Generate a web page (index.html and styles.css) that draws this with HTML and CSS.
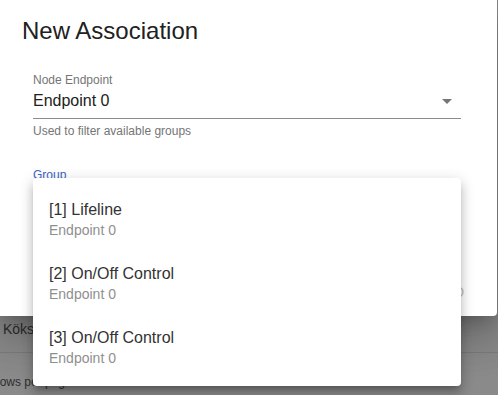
FILE: index.html
```html
<!DOCTYPE html>
<html>
<head>
	<meta charset="UTF-8">
	<title>New Association</title>
	<link rel="stylesheet" href="styles.css">
</head>
<body>
	<!-- page behind the dialog -->
	<div class="page">
		<div class="row">Köks</div>
		<div class="pager">Rows per page:</div>
	</div>

	<!-- dialog -->
	<div class="dialog">
		<div class="title">New Association</div>
		<div class="content">
			<div class="field">
				<div class="label">Node Endpoint</div>
				<div class="select">
					<span>Endpoint 0</span>
					<svg class="arrow" width="24" height="24" viewBox="0 0 24 24"><path d="M7 10l5 5 5-5z"/></svg>
				</div>
				<div class="helper">Used to filter available groups</div>
			</div>
			<div class="field group">
				<div class="label focused">Group</div>
			</div>
		</div>
		<div class="actions"><span class="btn">ADD</span></div>
	</div>

	<!-- open select menu -->
	<ul class="menu">
		<li class="item">
			<div class="primary">[1] Lifeline</div>
			<div class="secondary">Endpoint 0</div>
		</li>
		<li class="item">
			<div class="primary">[2] On/Off Control</div>
			<div class="secondary">Endpoint 0</div>
		</li>
		<li class="item">
			<div class="primary">[3] On/Off Control</div>
			<div class="secondary">Endpoint 0</div>
		</li>
	</ul>
</body>
</html>
```

FILE: styles.css
```css
body {
	margin: 0;
	width: 498px;
	height: 395px;
	overflow: hidden;
	background-color: #8a8a8a;
	font-family: "Liberation Sans", Arial, sans-serif;
	color: #212121;
}
.page {
	padding-top: 312px;
	color: #2e2e2e;
	font-size: 14px;
}
.page .row {
	height: 34px;
	line-height: 34px;
	padding: 0 0 6px 3px;
	border-bottom: 1px solid #7c7c7c;
}
.page .pager {
	font-size: 12px;
	line-height: 16px;
	margin-left: -9px;
	padding-top: 21px;
}

.dialog {
	position: absolute;
	left: 0;
	top: 0;
	width: 497px;
	height: 316px;
	background-color: #ffffff;
	border-radius: 0 0 4px 0;
	box-shadow: 0 11px 15px -7px rgba(0,0,0,.2), 0 24px 38px 3px rgba(0,0,0,.14), 0 9px 46px 8px rgba(0,0,0,.12);
}
.title {
	padding: 15px 0 0 22px;
	font-size: 24px;
	line-height: 32px;
}
.content {
	padding: 25px 36px 0 33px;
}
.label {
	font-size: 12px;
	line-height: 16px;
	color: #757575;
}
.label.focused {
	color: #3b63c4;
}
.select {
	display: flex;
	justify-content: space-between;
	align-items: center;
	font-size: 16px;
	line-height: 24px;
	padding-bottom: 5px;
	border-bottom: 1px solid #8c8c8c;
}
.arrow {
	fill: #757575;
	margin-right: 2px;
	margin-top: 1px;
}
.helper {
	margin-top: 4px;
	font-size: 12px;
	line-height: 16px;
	color: #757575;
}
.group {
	margin-top: 28px;
}
.actions {
	display: flex;
	justify-content: flex-end;
	padding: 101px 33px 0 0;
}
.btn {
	font-size: 14px;
	color: #bdbdbd;
}

.menu {
	position: absolute;
	left: 33px;
	top: 178px;
	width: 428px;
	margin: 0;
	padding: 8px 0;
	list-style: none;
	background-color: #ffffff;
	border-radius: 4px;
	box-shadow: 0 5px 5px -3px rgba(0,0,0,.2), 0 8px 10px 1px rgba(0,0,0,.14), 0 3px 14px 2px rgba(0,0,0,.12);
}
.item {
	height: 40px;
	padding: 12px 16px;
}
.primary {
	font-size: 16px;
	line-height: 24px;
	color: #333333;
}
.secondary {
	font-size: 14px;
	line-height: 16px;
	color: #8f8f8f;
}
```
